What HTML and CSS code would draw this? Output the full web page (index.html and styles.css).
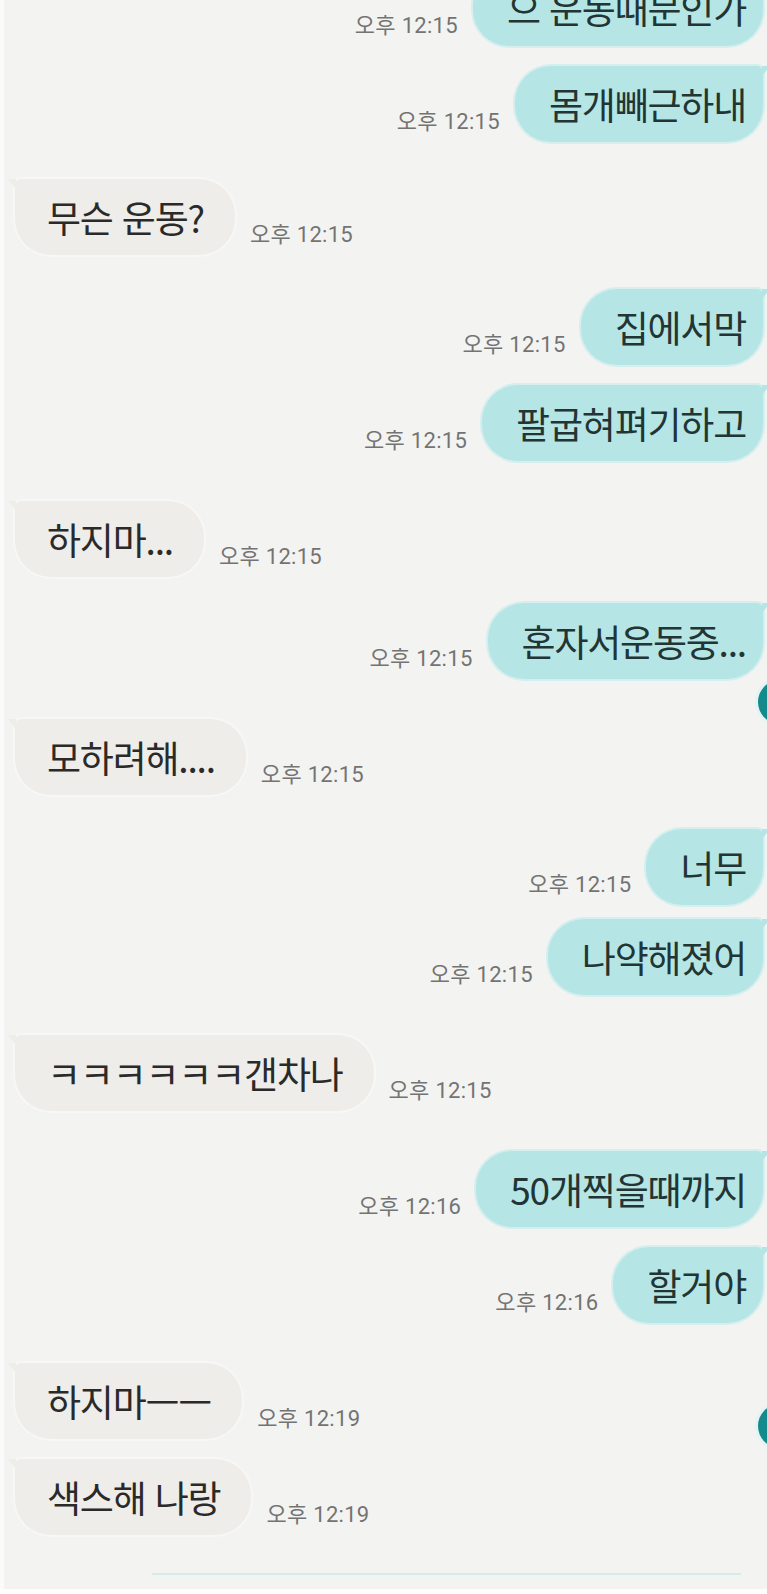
FILE: index.html
```html
<!DOCTYPE html>
<html lang="ko">

<head>
    <meta charset="UTF-8">
    <meta name="viewport" content="width=device-width, initial-scale=1.0">
    <title>채팅</title>
    <link rel="stylesheet" href="styles.css">
</head>

<body>
    <div class="screen">
        <div class="chat">
            <div class="row me first">
                <span class="time">오후 12:15</span>
                <div class="bubble">으 운동때문인가</div>
            </div>
            <div class="row me">
                <span class="time">오후 12:15</span>
                <div class="bubble">몸개빼근하내</div>
            </div>
            <div class="row you turn short">
                <div class="bubble">무슨 운동?</div>
                <span class="time">오후 12:15</span>
            </div>
            <div class="row me turn near">
                <span class="time">오후 12:15</span>
                <div class="bubble">집에서막</div>
            </div>
            <div class="row me">
                <span class="time">오후 12:15</span>
                <div class="bubble">팔굽혀펴기하고</div>
            </div>
            <div class="row you turn">
                <div class="bubble">하지마...</div>
                <span class="time">오후 12:15</span>
            </div>
            <div class="row me turn close">
                <span class="time">오후 12:15</span>
                <div class="bubble">혼자서운동중...</div>
            </div>
            <div class="row you turn">
                <div class="bubble">모하려해....</div>
                <span class="time">오후 12:15</span>
            </div>
            <div class="row me turn near">
                <span class="time">오후 12:15</span>
                <div class="bubble">너무</div>
            </div>
            <div class="row me tight">
                <span class="time">오후 12:15</span>
                <div class="bubble">나약해졌어</div>
            </div>
            <div class="row you turn">
                <div class="bubble">ㅋㅋㅋㅋㅋㅋ갠차나</div>
                <span class="time">오후 12:15</span>
            </div>
            <div class="row me turn">
                <span class="time">오후 12:16</span>
                <div class="bubble">50개찍을때까지</div>
            </div>
            <div class="row me">
                <span class="time">오후 12:16</span>
                <div class="bubble">할거야</div>
            </div>
            <div class="row you turn">
                <div class="bubble">하지마ㅡㅡ</div>
                <span class="time">오후 12:19</span>
            </div>
            <div class="row you">
                <div class="bubble">색스해 나랑</div>
                <span class="time">오후 12:19</span>
            </div>
        </div>

        <div class="divider"></div>

        <!-- floating buttons peeking in from the right edge -->
        <span class="fab fab-top"></span>
        <span class="fab fab-bottom"></span>
    </div>
</body>

</html>
```

FILE: styles.css
```css
body {
    margin: 0;
    background-color: #fdfdfd;
    font-family: "Noto Sans CJK KR", "Noto Sans", sans-serif;
    color: #2a2a2a;
}

.screen {
    position: relative;
    width: 763px;
    height: 1589px;
    overflow: hidden;
    background-color: #f3f3f2;
    border-left: 4px solid #fbfbfb;
}

.chat {
    display: flex;
    flex-direction: column;
}

.row {
    display: flex;
    align-items: flex-end;
    gap: 15px;
    margin-top: 20px;
}

.row.tight {
    margin-top: 14px;
}

.row.turn {
    margin-top: 40px;
}

.row.turn.short {
    margin-top: 37px;
}

.row.turn.near {
    margin-top: 34px;
}

.row.turn.close {
    margin-top: 26px;
}

.row.first {
    margin-top: -30px;
}

.row.me {
    justify-content: flex-end;
    padding-right: 4px;
}

.row.you {
    justify-content: flex-start;
    padding-left: 11px;
}

.bubble {
    position: relative;
    height: 76px;
    display: flex;
    align-items: center;
    font-size: 37px;
    letter-spacing: -1.2px;
    border-radius: 36px;
    white-space: nowrap;
}

.me .bubble {
    padding: 0 17px 0 34px;
    background-color: #b5e6e5;
    color: #223534;
    border-top-right-radius: 6px;
    box-shadow: 0 0 0 2px #d4efee;
}

.me .bubble::after {
    content: "";
    position: absolute;
    top: 0;
    right: -7px;
    border-top: 10px solid #b5e6e5;
    border-right: 8px solid transparent;
}

.you .bubble {
    padding: 0 31px 0 32px;
    background-color: #eeede9;
    color: #2a2a2a;
    border-top-left-radius: 6px;
    box-shadow: 0 0 0 2px #f7f7f5;
}

.you .bubble::after {
    content: "";
    position: absolute;
    top: 0;
    left: -7px;
    border-top: 10px solid #eeede9;
    border-left: 8px solid transparent;
}

.time {
    font-family: Roboto, "Noto Sans CJK KR", sans-serif;
    font-size: 22px;
    line-height: 26px;
    letter-spacing: 0.3px;
    color: #737373;
    margin-bottom: 7px;
    white-space: nowrap;
}

.divider {
    position: absolute;
    left: 148px;
    bottom: 14px;
    width: 589px;
    height: 2px;
    background-color: #d6ebea;
}

.fab {
    position: absolute;
    left: 754px;
    width: 44px;
    height: 44px;
    border-radius: 50%;
    background-color: #138a8b;
    box-shadow: 0 0 0 3px #e4f3f3;
}

.fab-top {
    top: 680px;
}

.fab-bottom {
    top: 1404px;
}
```
